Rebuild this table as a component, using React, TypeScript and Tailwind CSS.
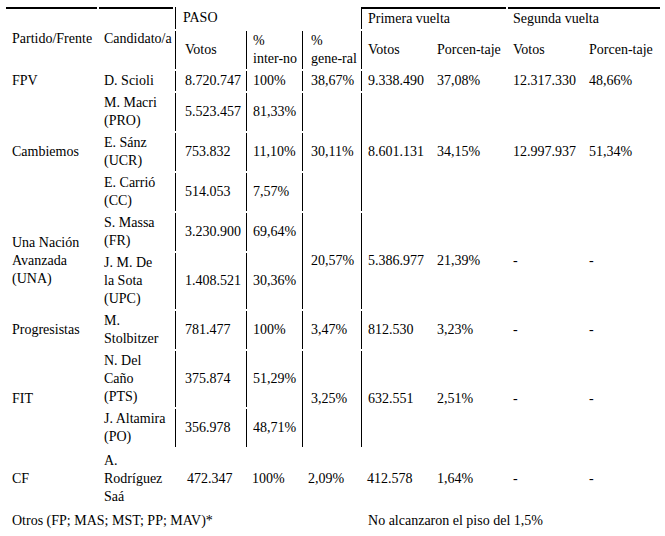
import React from "react";

const c1 = "pl-[6px] pr-[2px] py-[1px] whitespace-nowrap";
const c2 = "pl-[5px] pr-[2px] py-[1px] whitespace-nowrap";
const c3 = "border-l border-black pl-[9px] pr-[2px] py-[1px] whitespace-nowrap";
const c4 = "border-l border-black pl-[6px] pr-[2px] py-[1px] whitespace-nowrap";
const c5 = "border-l border-black pl-[8px] pr-[2px] py-[1px] whitespace-nowrap";
const c6 = "border-l border-black pl-[6px] pr-[2px] py-[1px] whitespace-nowrap";
const c7 = "pl-[5px] pr-[2px] py-[1px] whitespace-nowrap";
const c8 = "pl-[5px] pr-[2px] py-[1px] whitespace-nowrap";
const c9 = "pl-[5px] pr-[2px] py-[1px] whitespace-nowrap";
const f1 = "pl-[6px] pr-[2px] py-[3px] whitespace-nowrap";
const f2 = "pl-[5px] pr-[2px] py-[3px] whitespace-nowrap";
const f3 = "border-l border-transparent pl-[11px] pr-[2px] py-[3px] whitespace-nowrap";
const f4 = "border-l border-transparent pl-[5px] pr-[2px] py-[3px] whitespace-nowrap";
const f5 = "border-l border-transparent pl-[5px] pr-[2px] py-[3px] whitespace-nowrap";
const f6 = "border-l border-transparent pl-[5px] pr-[2px] py-[3px] whitespace-nowrap";
const f7 = "pl-[5px] pr-[2px] py-[3px] whitespace-nowrap";
const n6 = "border-l border-transparent pl-[6px] pr-[2px] py-[1px] whitespace-nowrap";

export default function App() {
  return (
    <div className="bg-white w-[665px] h-[536px] pt-[5px] pl-[4px] font-['Liberation_Serif',serif] text-[14px] leading-[18px] text-black">
      <table className="border-separate border-spacing-[2px] table-fixed w-[658px] text-left">
        <colgroup>
          <col className="w-[91px]" />
          <col className="w-[74px]" />
          <col className="w-[69px]" />
          <col className="w-[54px]" />
          <col className="w-[57px]" />
          <col className="w-[69px]" />
          <col className="w-[74px]" />
          <col className="w-[74px]" />
          <col className="w-[76px]" />
        </colgroup>
        <tbody>
          <tr>
            <td rowSpan={2} className="border-t-2 border-black pl-[6px] pr-[2px] py-[1px] whitespace-nowrap">Partido/Frente</td>
            <td rowSpan={2} className="border-t-2 border-black pl-[5px] pr-[2px] py-[1px] whitespace-nowrap">Candidato/a</td>
            <td colSpan={3} className="border-l border-black pl-[7px] py-[1px]">PASO</td>
            <td colSpan={2} className="border-l border-t-2 border-black pl-[6px] py-[1px]">Primera vuelta</td>
            <td colSpan={2} className="border-t-2 border-black pl-[5px] py-[1px]">Segunda vuelta</td>
          </tr>
          <tr>
            <td className={c3}>Votos</td>
            <td className={c4}>%<br />inter-no</td>
            <td className={c5}>%<br />gene-ral</td>
            <td className={c6}>Votos</td>
            <td className={c7}>Porcen-taje</td>
            <td className={c8}>Votos</td>
            <td className={c9}>Porcen-taje</td>
          </tr>
          <tr>
            <td className={c1}>FPV</td>
            <td className={c2}>D. Scioli</td>
            <td className={c3}>8.720.747</td>
            <td className={c4}>100%</td>
            <td className={c5}>38,67%</td>
            <td className={c6}>9.338.490</td>
            <td className={c7}>37,08%</td>
            <td className={c8}>12.317.330</td>
            <td className={c9}>48,66%</td>
          </tr>
          <tr>
            <td rowSpan={3} className={c1}>Cambiemos</td>
            <td className={c2}>M. Macri<br />(PRO)</td>
            <td className={c3}>5.523.457</td>
            <td className={c4}>81,33%</td>
            <td className={c5}></td>
            <td rowSpan={3} className={c6}>8.601.131</td>
            <td rowSpan={3} className={c7}>34,15%</td>
            <td rowSpan={3} className={c8}>12.997.937</td>
            <td rowSpan={3} className={c9}>51,34%</td>
          </tr>
          <tr>
            <td className={c2}>E. Sánz<br />(UCR)</td>
            <td className={c3}>753.832</td>
            <td className={c4}>11,10%</td>
            <td className={c5}>30,11%</td>
          </tr>
          <tr>
            <td className={c2}>E. Carrió<br />(CC)</td>
            <td className={c3}>514.053</td>
            <td className={c4}>7,57%</td>
            <td className={c5}></td>
          </tr>
          <tr>
            <td rowSpan={2} className={c1}>Una Nación<br />Avanzada<br />(UNA)</td>
            <td className={c2}>S. Massa<br />(FR)</td>
            <td className={c3}>3.230.900</td>
            <td className={c4}>69,64%</td>
            <td rowSpan={2} className={c5}>20,57%</td>
            <td rowSpan={2} className={c6}>5.386.977</td>
            <td rowSpan={2} className={c7}>21,39%</td>
            <td rowSpan={2} className={c8}>-</td>
            <td rowSpan={2} className={c9}>-</td>
          </tr>
          <tr>
            <td className={c2}>J. M. De<br />la Sota<br />(UPC)</td>
            <td className={c3}>1.408.521</td>
            <td className={c4}>30,36%</td>
          </tr>
          <tr>
            <td className={c1}>Progresistas</td>
            <td className={c2}>M.<br />Stolbitzer</td>
            <td className={c3}>781.477</td>
            <td className={c4}>100%</td>
            <td className={c5}>3,47%</td>
            <td className={c6}>812.530</td>
            <td className={c7}>3,23%</td>
            <td className={c8}>-</td>
            <td className={c9}>-</td>
          </tr>
          <tr>
            <td rowSpan={2} className={c1}>FIT</td>
            <td className={c2}>N. Del<br />Caño<br />(PTS)</td>
            <td className={c3}>375.874</td>
            <td className={c4}>51,29%</td>
            <td rowSpan={2} className={c5}>3,25%</td>
            <td rowSpan={2} className={c6}>632.551</td>
            <td rowSpan={2} className={c7}>2,51%</td>
            <td rowSpan={2} className={c8}>-</td>
            <td rowSpan={2} className={c9}>-</td>
          </tr>
          <tr>
            <td className={c2}>J. Altamira<br />(PO)</td>
            <td className={c3}>356.978</td>
            <td className={c4}>48,71%</td>
          </tr>
          <tr>
            <td className={f1}>CF</td>
            <td className={f2}>A.<br />Rodríguez<br />Saá</td>
            <td className={f3}>472.347</td>
            <td className={f4}>100%</td>
            <td className={f5}>2,09%</td>
            <td className={f6}>412.578</td>
            <td className={f7}>1,64%</td>
            <td className={f7}>-</td>
            <td className={f7}>-</td>
          </tr>
          <tr>
            <td colSpan={5} className={c1}>Otros (FP; MAS; MST; PP; MAV)*</td>
            <td colSpan={4} className={n6}>No alcanzaron el piso del 1,5%</td>
          </tr>
        </tbody>
      </table>
    </div>
  );
}
